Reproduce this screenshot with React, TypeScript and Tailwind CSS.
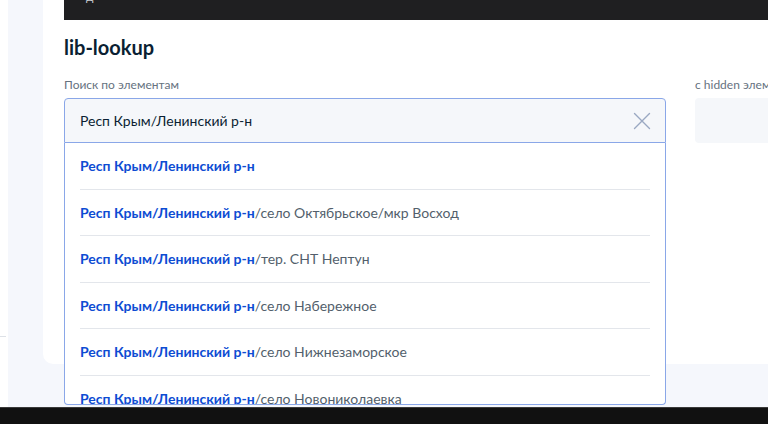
import React from 'react';

const items = [
  '',
  '/село Октябрьское/мкр Восход',
  '/тер. СНТ Нептун',
  '/село Набережное',
  '/село Нижнезаморское',
  '/село Новониколаевка',
  '/село Песочное',
];

const PREFIX = 'Респ Крым/Ленинский р-н';

const CloseIcon = () => (
  <svg width="18" height="18" viewBox="0 0 18 18" fill="none">
    <path d="M1.5 1.5L16.5 16.5M16.5 1.5L1.5 16.5" stroke="#9aa8c2" strokeWidth="1.4" strokeLinecap="round" />
  </svg>
);

const App: React.FC = () => {
  return (
    <div className="w-[768px] h-[424px] overflow-hidden flex flex-col bg-white font-['Lato','Noto_Sans',sans-serif]">
      <div className="h-[407px] flex">
        {/* left edge of sidebar */}
        <div className="w-[8px] shrink-0 bg-white flex flex-col">
          <div className="h-[336px]" />
          <div className="h-px w-[6px] bg-[#dde1e7]" />
        </div>

        <div className="flex-1 min-w-0 bg-[#f5f7fc] pl-[35px]">
          <div className="h-[364px] bg-white rounded-bl-[10px] pl-[21px] flex flex-col">
            <div className="h-[20px] bg-[#1f1f21] overflow-hidden pl-[22px]">
              <span className="block -mt-[12px] text-[12px] text-[#c9ccd1]">д</span>
            </div>

            <h1 className="mt-[13px] text-[20px] leading-[28px] font-bold text-[#0b1f33]">lib-lookup</h1>

            <div className="mt-[16px] flex gap-[29px]">
              <div className="w-[602px] shrink-0 flex flex-col">
                <div className="text-[12px] leading-[16px] text-[#66727f] mb-[5px]">Поиск по элементам</div>
                <div className="relative">
                  <div className="h-[45px] border border-[#8aa7e8] rounded-t-[4px] bg-[#f5f7fa] flex items-center pl-[15px] pr-[14px]">
                    <span className="flex-1 text-[14px] text-[#0b1f33]">{PREFIX}</span>
                    <CloseIcon />
                  </div>
                  <div className="absolute left-0 right-0 top-[45px] h-[262px] overflow-hidden bg-white border border-t-0 border-[#8aa7e8] rounded-b-[4px] z-10">
                    {items.map((rest, i) => (
                      <div key={i} className="mx-[15px] h-[46.5px] border-b border-[#e3e6eb] flex items-center text-[14px] whitespace-nowrap">
                        <span className="font-bold text-[#0d4cd3]">{PREFIX}</span>
                        <span className="text-[#535f6c]">{rest}</span>
                      </div>
                    ))}
                  </div>
                </div>
              </div>

              <div className="flex-1 flex flex-col min-w-0">
                <div className="text-[12px] leading-[16px] text-[#66727f] mb-[5px] whitespace-nowrap">c hidden элементами</div>
                <div className="h-[45px] w-[300px] shrink-0 rounded-[4px] bg-[#f5f7fa]" />
              </div>
            </div>
          </div>
        </div>
      </div>
      <div className="h-[17px] bg-[#111111] border-t border-[#3a3a3a]" />
    </div>
  );
};

export default App;
